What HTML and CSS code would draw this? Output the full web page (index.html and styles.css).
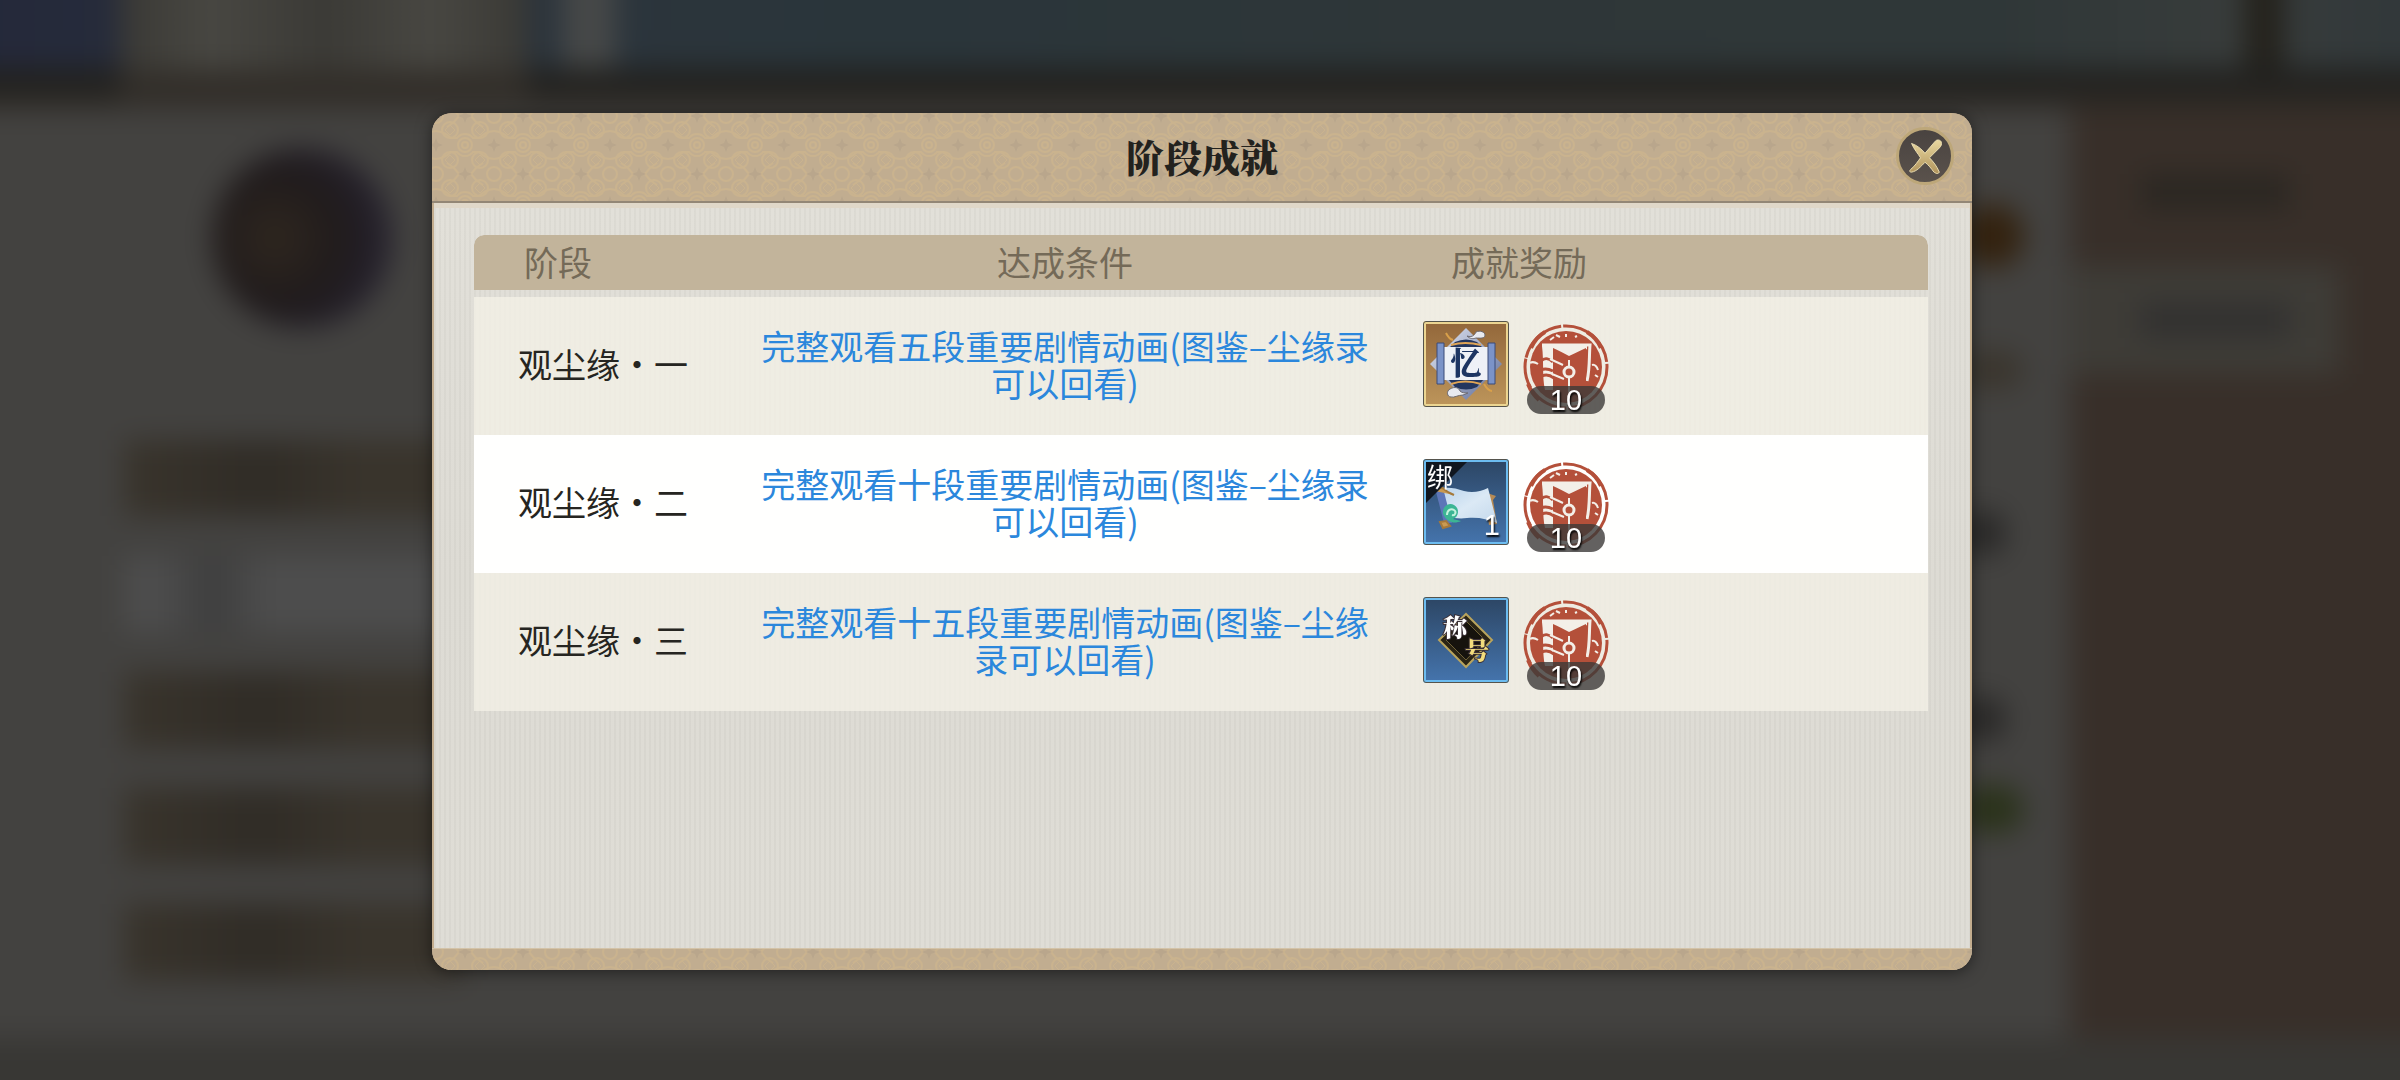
FILE: index.html
```html
<!DOCTYPE html>
<html lang="zh-CN">
<head>
    <meta charset="UTF-8">
    <meta name="viewport" content="width=device-width, initial-scale=1.0">
    <title>阶段成就</title>
    <link rel="stylesheet" href="styles.css">
</head>
<body>
    <svg class="defs" aria-hidden="true">
        <defs>
            <linearGradient id="gold" x1="0" y1="0" x2="0" y2="1">
                <stop offset="0" stop-color="#ead9a0"/>
                <stop offset="1" stop-color="#b0935c"/>
            </linearGradient>
            <linearGradient id="silver" x1="0" y1="0" x2="1" y2="1">
                <stop offset="0" stop-color="#e4e9f3"/>
                <stop offset="1" stop-color="#5d6b97"/>
            </linearGradient>
            <linearGradient id="sheet" x1="0" y1="0" x2="1" y2="1">
                <stop offset="0" stop-color="#b9d3ec"/>
                <stop offset="0.5" stop-color="#dbe9f5"/>
                <stop offset="1" stop-color="#c3d8eb"/>
            </linearGradient>
            <symbol id="seal" viewBox="0 0 86 86">
                <circle cx="43" cy="43" r="41" fill="none" stroke="#b4503a" stroke-width="3" stroke-dasharray="62 2 40 3 30 1 50 2"/>
                <circle cx="43" cy="43" r="36" fill="#b4503a"/>
                <path d="M8 24q5-11 14-16M64 8q10 6 14 16M5 60q4 10 11 16" stroke="#b4503a" stroke-width="4" fill="none"/>
                <path d="M19 22h11v44h-8c-3-14-1-28-3-44z" fill="#f3efe8"/>
                <path d="M19 21h48c-1 12 0 24-3 36" fill="none" stroke="#f3efe8" stroke-width="3"/>
                <path d="M29 21h35v4c-6 3-11 6-18 8-6-2-11-5-17-8z" fill="#f3efe8"/>
                <path d="M30 24c6 3 11 5 16 8 6-3 11-5 17-8v42H30z" fill="#b4503a"/>
                <path d="M46 36v32" stroke="#f3efe8" stroke-width="2"/>
                <circle cx="46" cy="48" r="5" fill="#b4503a" stroke="#f3efe8" stroke-width="3"/>
                <path d="M18 37c4-4 9-2 12 1M18 46c4-2 8-1 12 1M19 52c4-2 8-1 12 2" stroke="#b4503a" stroke-width="3" fill="none"/>
                <path d="M27 35l13 6M29 50l12 5M7 39c3-2 5-1 8 1M69 41c3-1 5 2 6 5M72 51l3 2" stroke="#f3efe8" stroke-width="2" fill="none"/>
                <path d="M33 11l4 2M27 16l4-3M43 10v3M52 13l2-1" stroke="#f3efe8" stroke-width="2"/>
            </symbol>
        </defs>
    </svg>

    <!-- dimmed game screen behind the dialog -->
    <div class="backdrop" aria-hidden="true">
        <div class="sky">
            <div class="tab"></div>
            <div class="cloud"></div>
            <div class="lamp"></div>
        </div>
        <div class="rail"></div>
        <div class="scene">
            <div class="left">
                <div class="avatar"></div>
                <div class="bar"></div>
                <div class="bar active"></div>
                <div class="bar"></div>
                <div class="bar"></div>
                <div class="bar"></div>
            </div>
            <div class="icons">
                <div class="blob orange"></div>
                <div class="blob tan"></div>
                <div class="blob dark"></div>
                <div class="blob dark"></div>
                <div class="blob green"></div>
            </div>
            <div class="right">
                <div class="line"></div>
                <div class="note"><div class="line"></div></div>
            </div>
        </div>
        <div class="floor"></div>
    </div>

    <section class="dialog" role="dialog" aria-labelledby="title">
        <header class="dialog-head">
            <h1 id="title">阶段成就</h1>
            <button class="close" type="button" aria-label="关闭">
                <svg viewBox="0 0 58 58">
                    <path d="M14 15c6 2 11 6 15 11l11-13c2-3 6-2 7 0 1 3 0 5-2 7L34 31c4 4 8 9 11 16-2 3-4 1-6 0-3-4-6-8-10-11-5 5-9 10-15 11-2 0-3-1-1-3 5-4 8-9 11-13-3-5-7-9-10-16z" fill="url(#gold)" stroke="#f3e6b8"/>
                </svg>
            </button>
        </header>
        <div class="dialog-body">
            <table>
                <thead>
                    <tr>
                        <th class="stage">阶段</th>
                        <th class="goal">达成条件</th>
                        <th class="reward">成就奖励</th>
                    </tr>
                </thead>
                <tbody>
                    <tr>
                        <td class="stage">观尘缘・一</td>
                        <td class="goal">完整观看五段重要剧情动画(图鉴–尘缘录可以回看)</td>
                        <td class="reward">
                            <div class="rewards">
                                <div class="item item-gold">
                                    <svg viewBox="0 0 80 80">
                                        <path d="M20 9q3 6 7 7M58 60q4 7 8 7" stroke="#d9a04a" stroke-width="2" fill="none"/>
                                        <path d="M40 4l36 36-36 36L4 40z" fill="url(#silver)"/>
                                        <path d="M29 18q11-5 22 0l7 7H22zM22 55h36l-7 8q-11 5-22 0z" fill="#24365f"/>
                                        <path d="M25 21q14-4 30 0M25 60q14-5 30 0" stroke="#e0a556" stroke-width="2" fill="none"/>
                                        <path d="M41 12c6 2 8-2 9-4 4-2 9 0 9 3 0 4-5 3-9 3-3 1-6 1-9-2zM37 71c-5 0-9 3-12 2-4 0-5-6-1-8 5-3 9-1 10 2 2 2 5 2 8 2z" fill="#e8eaf0" stroke="#6d6a70"/>
                                        <path d="M17 23h46v33H17z" fill="#eef1f7"/>
                                        <path d="M11 19h7v41h-7zM62 19h7v41h-7z" fill="#7b93c8" stroke="#3a4a78"/>
                                        <text class="glyph" x="40" y="50" text-anchor="middle">忆</text>
                                    </svg>
                                </div>
                                <div class="seal">
                                    <svg><use href="#seal"/></svg>
                                    <span class="count">10</span>
                                </div>
                            </div>
                        </td>
                    </tr>
                    <tr>
                        <td class="stage">观尘缘・二</td>
                        <td class="goal">完整观看十段重要剧情动画(图鉴–尘缘录可以回看)</td>
                        <td class="reward">
                            <div class="rewards">
                                <div class="item item-blue">
                                    <svg viewBox="0 0 80 80">
                                        <path d="M58 30l12 4-3 4 4 24-8 1z" fill="#b58a55"/>
                                        <path d="M14 26c10-1 16 0 24 3 8 2 16 1 24-3l9 35c-10-4-18-6-30-5-7 1-13 0-20-1z" fill="url(#sheet)"/>
                                        <path d="M9 26h8l9 35h-8z" fill="#5d76b8"/>
                                        <path d="M9 29q6-5 9-2t10 6M14 60l6-1 4 5-7 2z" stroke="#a5793a" stroke-width="2" fill="#c99a52"/>
                                        <path d="M17 52c-1-8 6-12 11-9 6 3 5 12-1 14l8 2c-6 3-14 2-18-7z" fill="#3cb594"/>
                                        <path d="M21 53c0-5 4-7 7-5s1 6-2 5" stroke="#c4f2dc" stroke-width="2" fill="none"/>
                                        <path d="M0 0h41L0 41z" fill="#10161f"/>
                                    </svg>
                                    <span class="bound">绑</span>
                                    <span class="amount">1</span>
                                </div>
                                <div class="seal">
                                    <svg><use href="#seal"/></svg>
                                    <span class="count">10</span>
                                </div>
                            </div>
                        </td>
                    </tr>
                    <tr>
                        <td class="stage">观尘缘・三</td>
                        <td class="goal">完整观看十五段重要剧情动画(图鉴–尘缘录可以回看)</td>
                        <td class="reward">
                            <div class="rewards">
                                <div class="item item-blue">
                                    <svg viewBox="0 0 80 80">
                                        <path d="M40 14l26 26-26 27-27-27z" fill="#2a2414" stroke="#b9a45d" stroke-width="2"/>
                                        <path d="M40 21l19 19-19 20-20-20z" fill="#16130d" stroke="#6f6238"/>
                                        <text class="name" x="17" y="36">称</text>
                                        <text class="name gold" x="39" y="59">号</text>
                                    </svg>
                                </div>
                                <div class="seal">
                                    <svg><use href="#seal"/></svg>
                                    <span class="count">10</span>
                                </div>
                            </div>
                        </td>
                    </tr>
                </tbody>
            </table>
        </div>
        <footer class="dialog-foot"></footer>
    </section>
</body>
</html>
```

FILE: styles.css
```css
* {
    box-sizing: border-box;
}
body {
    margin: 0;
    min-height: 100vh;
    padding: 3px 0 0 4px;
    display: grid;
    place-items: center;
    background: #3c3b39;
    font-family: 'Noto Sans CJK SC', sans-serif;
    font-size: 34px;
    line-height: 37px;
    overflow: hidden;
}
.defs {
    position: absolute;
    width: 0;
    height: 0;
}

/* backdrop */
.backdrop {
    position: fixed;
    inset: -40px;
    padding: 0 40px;
    display: flex;
    flex-direction: column;
    filter: blur(14px);
    background: linear-gradient(90deg, #434240 50%, #382f29 50%);
}
.sky {
    height: 108px;
    margin: 0 -40px;
    padding: 0 40px;
    display: flex;
    background: linear-gradient(90deg, #24283a, #2b343c 24%, #2a353a 38%, #2e3638 60%, #2f3738 82%, #383c3b 92%, #30373a);
}
.tab {
    position: relative;
    width: 17%;
    height: 144px;
    margin-left: 5%;
    background: linear-gradient(90deg, #3a3935, #484742 22%, #3b3a36 50%, #484742 76%, #3a3935);
    border-bottom: 34px solid #322e29;
}
.cloud {
    width: 54px;
    margin-left: 34px;
    background: #464848;
}
.lamp {
    width: 40px;
    margin: 0 116px 0 auto;
    background: #24221c;
}
.rail {
    height: 40px;
    margin: 0 -40px;
    background: linear-gradient(#1d1e1d, #2d2924);
}
.scene {
    flex: 1;
    display: flex;
    background: #434240;
    margin: 0 -40px;
    padding-left: 40px;
}
.left {
    flex: 1;
    padding: 40px 0 0 124px;
}
.avatar {
    width: 180px;
    height: 180px;
    margin: 0 0 112px 88px;
    border-radius: 50%;
    background: radial-gradient(circle at 35% 50%, #2f271f, #201b1c 45%, #29263a 95%);
}
.bar {
    width: 340px;
    height: 76px;
    margin-bottom: 40px;
    background: linear-gradient(90deg, #39342c, #302c26 40%, #39342c 70%);
}
.bar.active {
    background: linear-gradient(90deg, #4d4d4d 10%, #3e3e3e 26%, #4d4d4d 42%);
}
.icons {
    width: 110px;
    padding-top: 96px;
}
.blob {
    width: 64px;
    height: 64px;
    border-radius: 50%;
}
.orange {
    background: #33220f;
}
.tan {
    height: 40px;
    margin: 82px 0 120px;
    background: #3a352d;
}
.dark {
    width: 46px;
    height: 46px;
    margin: 0 0 140px;
    background: #292827;
}
.dark + .dark {
    margin-bottom: 42px;
}
.green {
    background: #2a321a;
    height: 50px;
}
.right {
    width: 370px;
    padding-top: 66px;
    background: #382f29;
}
.line {
    width: 150px;
    height: 36px;
    margin-left: 70px;
    background: #2b2722;
}
.note {
    width: 270px;
    height: 108px;
    margin-top: 56px;
    padding-top: 36px;
    background: #3e3c37;
}
.note .line {
    background: #323130;
}
.floor {
    height: 82px;
    margin: 0 -40px;
    background: #383734;
}

/* dialog */
.dialog {
    position: relative;
    width: 90%;
    max-width: 1540px;
    border-radius: 20px;
    overflow: hidden;
    background: #c3ad8e;
    box-shadow: 0 2px 16px rgba(0, 0, 0, 0.5);
}
.dialog-head, .dialog-foot {
    background: #c1ad90 url("data:image/svg+xml,%3Csvg xmlns='http://www.w3.org/2000/svg' width='58' height='58' fill='none' stroke='%23cab38e' stroke-width='2'%3E%3Cg%3E%3Ccircle cx='29' cy='29' r='7'/%3E%3Ccircle cx='29' cy='29' r='3'/%3E%3Cpath d='M29 18q5 0 8 4l6 0q6-6 15-7M29 18q-5 0-8 4l-6 0q-6-6-15-7M29 40q5 0 8-4l6 0q6 6 15 7M29 40q-5 0-8-4l-6 0q-6 6-15 7'/%3E%3C/g%3E%3Cg%3E%3Ccircle cx='0' cy='0' r='7'/%3E%3Ccircle cx='58' cy='0' r='7'/%3E%3Ccircle cx='0' cy='58' r='7'/%3E%3Ccircle cx='58' cy='58' r='7'/%3E%3Cpath d='M11 11l7-5 5-6M47 11l-7-5-5-6M11 47l7 5 5 6M47 47l-7 5-5 6'/%3E%3Ccircle cx='14' cy='14' r='8'/%3E%3Ccircle cx='44' cy='14' r='8'/%3E%3Ccircle cx='14' cy='44' r='8'/%3E%3Ccircle cx='44' cy='44' r='8'/%3E%3Cpath stroke-width='1' d='M14 9l5 5-5 5-5-5zM44 9l5 5-5 5-5-5zM14 39l5 5-5 5-5-5zM44 39l5 5-5 5-5-5z'/%3E%3C/g%3E%3Cpath stroke='none' fill='%23b9a68c' d='M29-7l2 5 5 2-5 2-2 5-2-5-5-2 5-2zM29 51l2 5 5 2-5 2-2 5-2-5-5-2 5-2zM0 22l2 5 5 2-5 2-2 5zM58 22l-2 5-5 2 5 2 2 5z'/%3E%3C/svg%3E") 4px 3px;
}
.dialog-head {
    position: relative;
    height: 90px;
    padding-bottom: 2px;
    display: grid;
    place-items: center;
    border-bottom: 2px solid #938776;
}
h1 {
    margin: 0;
    font-family: 'Noto Serif CJK SC', 'Noto Sans CJK SC', serif;
    font-size: 38px;
    line-height: 44px;
    font-weight: 900;
    color: #23221e;
}
.close {
    position: absolute;
    top: 14px;
    right: 18px;
    width: 58px;
    height: 58px;
    padding: 0;
    border: 3px solid #bda779;
    border-radius: 50%;
    background: linear-gradient(#494340, #5a524c);
    cursor: pointer;
}
.close svg {
    display: block;
    width: 52px;
    height: 52px;
}
.dialog-body {
    min-height: 745px;
    margin: 0 2px;
    padding: 27px 42px 27px 40px;
    border-top: 5px solid #e0d8c9;
    background: repeating-linear-gradient(90deg, rgba(120, 120, 110, 0.06) 0 2px, transparent 2px 5px), linear-gradient(#e2e0d9, #dddbd4 50%, #dfddd6);
}
.dialog-foot {
    height: 22px;
    border-top: 1px solid #d3c3a8;
}
table {
    width: 100%;
    table-layout: fixed;
    border-collapse: separate;
    border-spacing: 0;
}
th {
    height: 62px;
    padding: 0 0 2px;
    font-weight: 400;
    color: #746a58;
    background: #c2b49b;
    background-clip: padding-box;
    border-bottom: 7px solid transparent;
}
th:first-child {
    border-top-left-radius: 10px;
}
th:last-child {
    border-top-right-radius: 10px;
}
td {
    height: 138px;
    padding: 0 0 5px;
    color: #262521;
    background: rgba(244, 241, 231, 0.75);
}
tr:nth-child(2) td {
    background: #fffffe;
}
.stage {
    width: 281px;
    padding-left: 44px;
    text-align: left;
}
th.stage {
    padding-left: 50px;
}
.goal {
    width: 620px;
    text-align: center;
}
td.goal {
    color: #2b87dc;
}
.reward {
    padding-left: 48px;
    text-align: left;
}
th.reward {
    padding-left: 76px;
}
.rewards {
    display: flex;
    gap: 14px;
}
.item {
    position: relative;
    width: 86px;
    height: 86px;
    border: 3px solid;
    border-radius: 3px;
    outline: 1px solid #55544c;
    outline-offset: -1px;
}
.item svg {
    display: block;
}
.item-gold {
    border-color: #ecd591;
    background: linear-gradient(#94683b, #bc945a);
}
.item-blue {
    border-color: #6cbcf0;
    background: linear-gradient(#2d4766, #4473ab);
}
.glyph {
    font-family: 'Noto Serif CJK SC', 'Noto Sans CJK SC', serif;
    font-size: 31px;
    font-weight: 900;
    fill: #1d3563;
}
.name {
    font-family: 'Noto Serif CJK SC', 'Noto Sans CJK SC', serif;
    font-size: 24px;
    font-weight: 900;
    fill: #fff;
    stroke: #3a2f35;
    paint-order: stroke;
    stroke-width: 2px;
}
.name.gold {
    fill: #f2dc7c;
}
.bound {
    position: absolute;
    top: 0;
    left: 1px;
    font-size: 26px;
    line-height: 28px;
    color: #fff;
}
.amount, .count {
    position: absolute;
    color: #fff;
    font-family: 'Liberation Sans', sans-serif;
    font-size: 29px;
    line-height: 28px;
    text-shadow: 1px 2px 2px #000;
}
.amount {
    right: 6px;
    bottom: 3px;
}
.seal {
    position: relative;
    width: 86px;
    height: 86px;
    margin-top: 3px;
    margin-bottom: -3px;
}
.seal svg {
    display: block;
    width: 86px;
    height: 86px;
}
.count {
    left: 4px;
    right: 4px;
    bottom: -4px;
    border-radius: 14px;
    background: rgba(60, 58, 56, 0.8);
    text-align: center;
}
```
